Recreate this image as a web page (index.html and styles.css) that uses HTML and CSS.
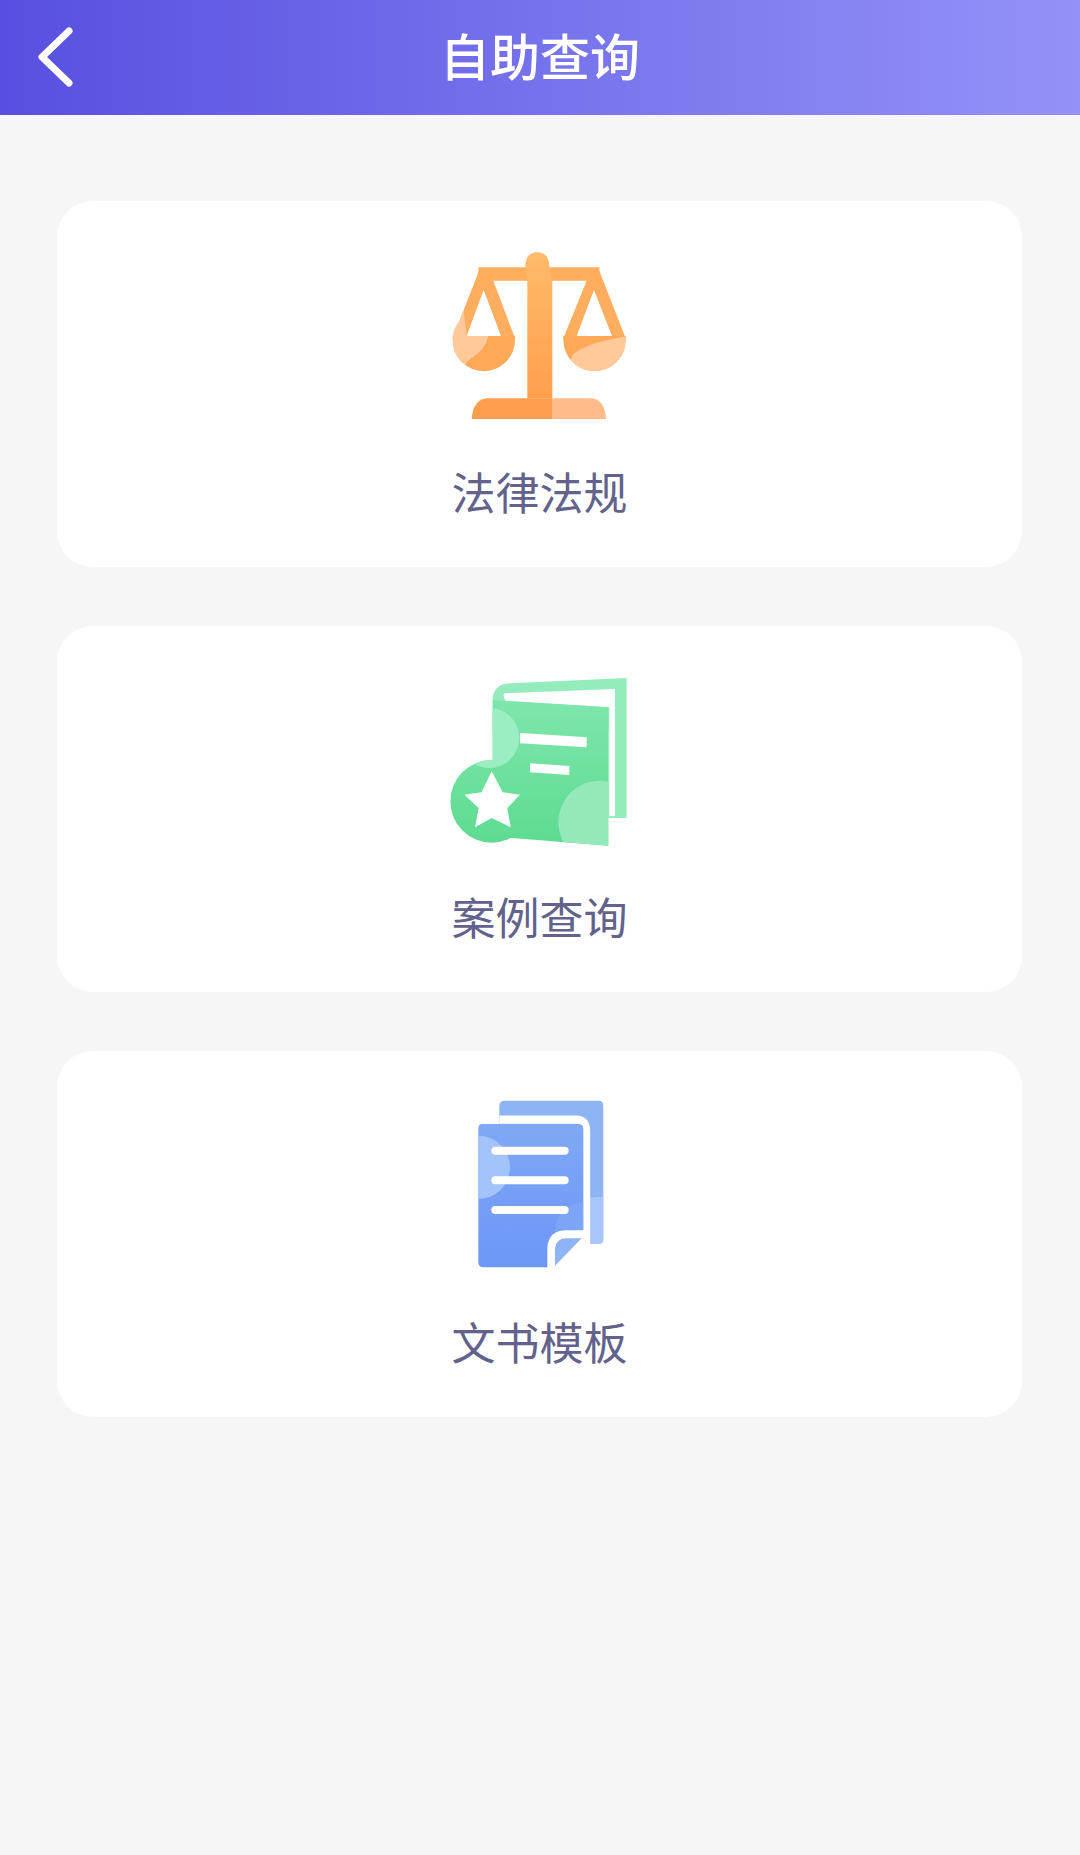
FILE: index.html
```html
<!DOCTYPE html>
<html lang="zh-CN">
<head>
  <meta charset="UTF-8">
  <meta name="viewport" content="width=device-width, initial-scale=1.0">
  <title>自助查询</title>
  <link rel="stylesheet" href="styles.css">
</head>
<body>

  <div class="header">
    <svg class="back" viewBox="0 0 40 60">
      <path d="M34 4 L7 30 L34 56" />
    </svg>
    <h1>自助查询</h1>
  </div>

  <div class="list">

    <div class="card">
      <!-- scales -->
      <svg class="icon" viewBox="60 42 540 540">
        <defs>
          <linearGradient id="orange" x1="0" y1="0" x2="0" y2="1">
            <stop offset="0" stop-color="#ffbb6b"/>
            <stop offset="1" stop-color="#ff9f4d"/>
          </linearGradient>
          <clipPath id="pan-left">
            <path d="M150 100 L190 137 L255 310 H68 Z"/>
            <circle cx="161.5" cy="315" r="93.5"/>
          </clipPath>
          <clipPath id="pan-right">
            <path d="M505 100 L470 137 L400 310 H587 Z"/>
            <circle cx="493.5" cy="315" r="93.5"/>
          </clipPath>
        </defs>
        <path fill="#ffae5f" d="M145 97 H508 V137 H145 Z"/>
        <path fill="#ffae5f" fill-rule="evenodd" d="M150 100 L190 137 L255 310 H68 Z M161 165 L110 303 H213 Z"/>
        <path fill="#ffae5f" fill-rule="evenodd" d="M505 100 L470 137 L400 310 H587 Z M492 165 L440 303 H546 Z"/>
        <path fill="url(#orange)" d="M286 97 Q286 52 322 52 Q358 52 358 97 L367 137 V490 H292 V137 Z"/>
        <path fill="#ffa858" d="M68 303 H255 V315 A93.5 93.5 0 0 1 68 315 Z"/>
        <path fill="#ffa858" d="M400 303 H587 V315 A93.5 93.5 0 0 1 400 315 Z"/>
        <path fill="#ffc999" clip-path="url(#pan-left)" d="M60 220 H100 L110 303 H175 Q165 345 130 365 Q110 378 100 395 H60 Z"/>
        <path fill="#ffc999" clip-path="url(#pan-right)" d="M430 358 Q470 322 600 303 V420 H400 Z"/>
        <path fill="#ff9f4d" d="M125 552 Q130 490 175 490 H368 V552 Z"/>
        <path fill="#ffbc8a" d="M368 490 H480 Q525 490 528 552 H368 Z"/>
      </svg>
      <div class="label">法律法规</div>
    </div>

    <div class="card">
      <!-- book with star -->
      <svg class="icon" viewBox="60 30 540 540">
        <defs>
          <linearGradient id="green" gradientUnits="userSpaceOnUse" x1="0" y1="108" x2="0" y2="545">
            <stop offset="0" stop-color="#7fe6ac"/>
            <stop offset="1" stop-color="#5ddb90"/>
          </linearGradient>
          <clipPath id="book-front">
            <path d="M188 108 L535 130 V545 L200 518 H188 Z"/>
            <circle cx="185" cy="412" r="124"/>
          </clipPath>
        </defs>
        <path fill="#94ecbd" d="M188 110 Q188 60 240 58 L590 42 V462 H535 V200 H188 Z"/>
        <path fill="#ffffff" d="M222 88 L555 75 V456 H538 V130 L228 112 Q218 100 222 88 Z"/>
        <path fill="url(#green)" d="M188 108 L535 130 V545 L200 518 H188 Z"/>
        <circle cx="185" cy="412" r="124" fill="url(#green)"/>
        <g clip-path="url(#book-front)">
          <circle cx="178" cy="222" r="90" fill="#9aeec2"/>
          <circle cx="510" cy="475" r="125" fill="#94e9bb"/>
        </g>
        <path fill="#ffffff" d="M270 207 L470 220 V250 L270 238 Z"/>
        <path fill="#ffffff" d="M300 298 L418 306 V333 L300 325 Z"/>
        <path fill="#ffffff" d="M185 322 L218 385 L270 392 L232 432 L242 490 L185 462 L135 490 L146 432 L103 392 L155 385 Z"/>
      </svg>
      <div class="label">案例查询</div>
    </div>

    <div class="card">
      <!-- documents -->
      <svg class="icon" viewBox="0 45 540 540">
        <defs>
          <linearGradient id="blue" x1="0" y1="0" x2="0" y2="1">
            <stop offset="0" stop-color="#7fa8f5"/>
            <stop offset="1" stop-color="#6c97f7"/>
          </linearGradient>
          <clipPath id="doc-front"><path d="M85 132 Q85 120 97 120 H385 Q400 120 400 135 V440 H345 Q300 440 295 490 V550 H100 Q85 550 85 535 Z"/></clipPath>
        </defs>
        <path fill="#8db4f5" d="M148 66 Q148 50 164 50 H445 Q460 50 460 66 V465 Q460 480 445 480 H400 V150 H148 Z"/>
        <path fill="#a9c6fa" d="M416 342 Q440 338 460 338 V465 Q460 480 445 480 H416 Z"/>
        <path fill="none" stroke="#ffffff" stroke-width="25" d="M148 107 H378 Q408 107 408 140 V490"/>
        <path fill="url(#blue)" d="M85 132 Q85 120 97 120 H385 Q400 120 400 135 V440 H345 Q300 440 295 490 V550 H100 Q85 550 85 535 Z"/>
        <g clip-path="url(#doc-front)">
          <circle cx="85" cy="250" r="95" fill="#a4c3fb"/>
          <circle cx="400" cy="440" r="85" fill="#7da5f6"/>
        </g>
        <path fill="none" stroke="#ffffff" stroke-width="24" stroke-linecap="round" d="M136 200 H344 M136 289 H344 M136 378 H344"/>
        <path fill="none" stroke="#ffffff" stroke-width="22" d="M303 550 V492 Q306 450 350 450 H415"/>
        <path fill="#8fb3f7" d="M315 545 V492 Q320 463 348 463 H395 Z"/>
      </svg>
      <div class="label">文书模板</div>
    </div>

  </div>

</body>
</html>
```

FILE: styles.css
```css
body {
    margin: 0;
    height: 1855px;
    background-color: #f6f6f6;
    font-family: "Noto Sans CJK SC", "Noto Sans", sans-serif;
}

.header {
    position: relative;
    height: 115px;
    box-sizing: border-box;
    padding-bottom: 8px;
    display: flex;
    align-items: center;
    justify-content: center;
    background: linear-gradient(90deg, #584fe0 0%, #7672ec 50%, #9492f8 100%);
}

.header h1 {
    margin: 0;
    font-size: 50px;
    font-weight: 500;
    color: #ffffff;
}

.back {
    position: absolute;
    left: 35px;
    top: 27px;
    width: 40px;
    height: 60px;
}

.back path {
    fill: none;
    stroke: #ffffff;
    stroke-width: 7;
    stroke-linecap: round;
    stroke-linejoin: round;
}

.list {
    display: flex;
    flex-direction: column;
    gap: 59px;
    padding: 86px 58px 0 57px;
}

.card {
    height: 366px;
    box-sizing: border-box;
    padding-top: 48px;
    display: flex;
    flex-direction: column;
    align-items: center;
    background-color: #ffffff;
    border-radius: 36px;
}

.icon {
    width: 180px;
    height: 180px;
    filter: blur(0.6px);
}

.label {
    margin-top: 32px;
    font-size: 44px;
    line-height: 60px;
    color: #62628c;
}
```
